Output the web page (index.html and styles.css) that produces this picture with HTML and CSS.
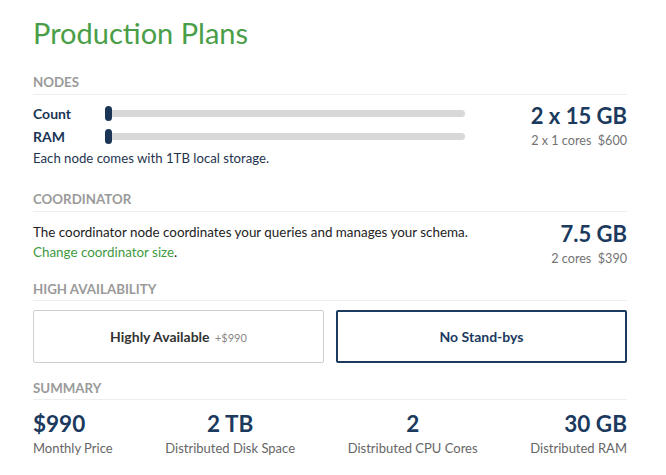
FILE: index.html
```html
<!DOCTYPE html>
<html>
<head>
<meta charset="utf-8">
<link rel="stylesheet" href="styles.css">
</head>
<body>
<div class="page">
  <h1 class="title">Production Plans</h1>

  <section class="section section-nodes">
    <h2 class="section-title">Nodes</h2>
    <div class="section-body">
      <div class="left">
        <div class="slider-row">
          <span class="slider-label">Count</span>
          <div class="track"><span class="thumb"></span></div>
        </div>
        <div class="slider-row">
          <span class="slider-label">RAM</span>
          <div class="track"><span class="thumb"></span></div>
        </div>
        <p class="note">Each node comes with 1TB local storage.</p>
      </div>
      <div class="stat">
        <div class="stat-value">2 x 15 GB</div>
        <div class="stat-sub">2 x 1 cores&nbsp;&nbsp;$600</div>
      </div>
    </div>
  </section>

  <section class="section section-coord">
    <h2 class="section-title">Coordinator</h2>
    <div class="section-body">
      <div class="left">
        <p class="text">The coordinator node coordinates your queries and manages your schema.</p>
        <p class="text"><a class="link" href="#">Change coordinator size</a>.</p>
      </div>
      <div class="stat">
        <div class="stat-value">7.5 GB</div>
        <div class="stat-sub">2 cores&nbsp;&nbsp;$390</div>
      </div>
    </div>
  </section>

  <section class="section section-ha">
    <h2 class="section-title">High Availability</h2>
    <div class="options">
      <button class="option">Highly Available <span class="option-extra">+$990</span></button>
      <button class="option option-selected">No Stand-bys</button>
    </div>
  </section>

  <section class="section section-summary">
    <h2 class="section-title">Summary</h2>
    <div class="summary">
      <div class="summary-item item-left">
        <div class="summary-value">$990</div>
        <div class="summary-label">Monthly Price</div>
      </div>
      <div class="summary-item">
        <div class="summary-value">2 TB</div>
        <div class="summary-label">Distributed Disk Space</div>
      </div>
      <div class="summary-item">
        <div class="summary-value">2</div>
        <div class="summary-label">Distributed CPU Cores</div>
      </div>
      <div class="summary-item item-right">
        <div class="summary-value">30 GB</div>
        <div class="summary-label">Distributed RAM</div>
      </div>
    </div>
  </section>
</div>
</body>
</html>
```

FILE: styles.css
```css
* { box-sizing: border-box; }

html, body {
  margin: 0;
  padding: 0;
  background: #ffffff;
}

body {
  font-family: Lato, "Open Sans", "Liberation Sans", sans-serif;
  color: #1f3450;
}

.page {
  width: 594px;
  margin-left: 33px;
  padding-top: 15px;
}

.title {
  margin: 0;
  font-size: 29px;
  line-height: 36px;
  font-weight: 400;
  color: #4a9e48;
}

.section {
  margin-top: 22px;
}

.section-nodes {
  margin-top: 23px;
}

.section-title {
  margin: 0;
  font-size: 13.3px;
  line-height: 16px;
  font-weight: 700;
  text-transform: uppercase;
  color: #9a9a9a;
  padding-bottom: 4px;
  border-bottom: 1px solid #eeeeee;
}

.section-body {
  display: flex;
  justify-content: space-between;
  align-items: flex-start;
  margin-top: 7px;
}

.slider-row {
  display: flex;
  align-items: center;
  height: 23px;
}

.slider-label {
  width: 72px;
  font-size: 14px;
  font-weight: 700;
  color: #1b3556;
}

.track {
  position: relative;
  width: 360px;
  height: 7px;
  border-radius: 4px;
  background: #d8d8d8;
}

.thumb {
  position: absolute;
  left: 0;
  top: -4px;
  width: 7px;
  height: 15px;
  border-radius: 4px;
  background: #1b3556;
}

.note {
  margin: 0;
  font-size: 13.2px;
  line-height: 20px;
  color: #1f3450;
}

.stat {
  text-align: right;
  margin-top: 0;
}

.stat-value {
  font-size: 22px;
  line-height: 28px;
  font-weight: 700;
  color: #1b3a5e;
}

.stat-sub {
  font-size: 12.6px;
  line-height: 18px;
  margin-top: 2px;
  color: #737373;
}

.section-coord {
  margin-top: 23px;
}

.section-coord .section-body {
  margin-top: 10px;
}

.text {
  margin: 0;
  font-size: 13.4px;
  line-height: 20px;
  color: #222;
}

.link {
  color: #3f9a3f;
  text-decoration: none;
}

.section-coord .stat {
  margin-top: -2px;
}

.section-ha {
  margin-top: 13px;
}

.section-ha .section-title {
  padding-bottom: 3px;
}

.options {
  display: grid;
  grid-template-columns: 1fr 1fr;
  gap: 12px;
  margin-top: 9px;
}

.option {
  height: 53px;
  background: #fff;
  border: 1px solid #cfcfcf;
  border-radius: 2px;
  font-family: inherit;
  font-size: 14px;
  font-weight: 700;
  color: #333;
  padding: 0;
}

.option-extra {
  font-size: 11px;
  font-weight: 400;
  color: #888;
  margin-left: 2px;
}

.option-selected {
  border: 2px solid #1b3a5e;
  color: #1b3a5e;
}

.section-summary {
  margin-top: 17px;
}

.section-summary .section-title {
  padding-bottom: 3px;
}

.summary {
  display: flex;
  justify-content: space-between;
  margin-top: 10px;
}

.summary-item {
  text-align: center;
}

.item-left { text-align: left; }
.item-right { text-align: right; }

.summary-value {
  font-size: 22.5px;
  line-height: 28px;
  font-weight: 700;
  color: #1b3a5e;
}

.summary-label {
  font-size: 13px;
  line-height: 18px;
  margin-top: 1px;
  color: #666;
}
```
